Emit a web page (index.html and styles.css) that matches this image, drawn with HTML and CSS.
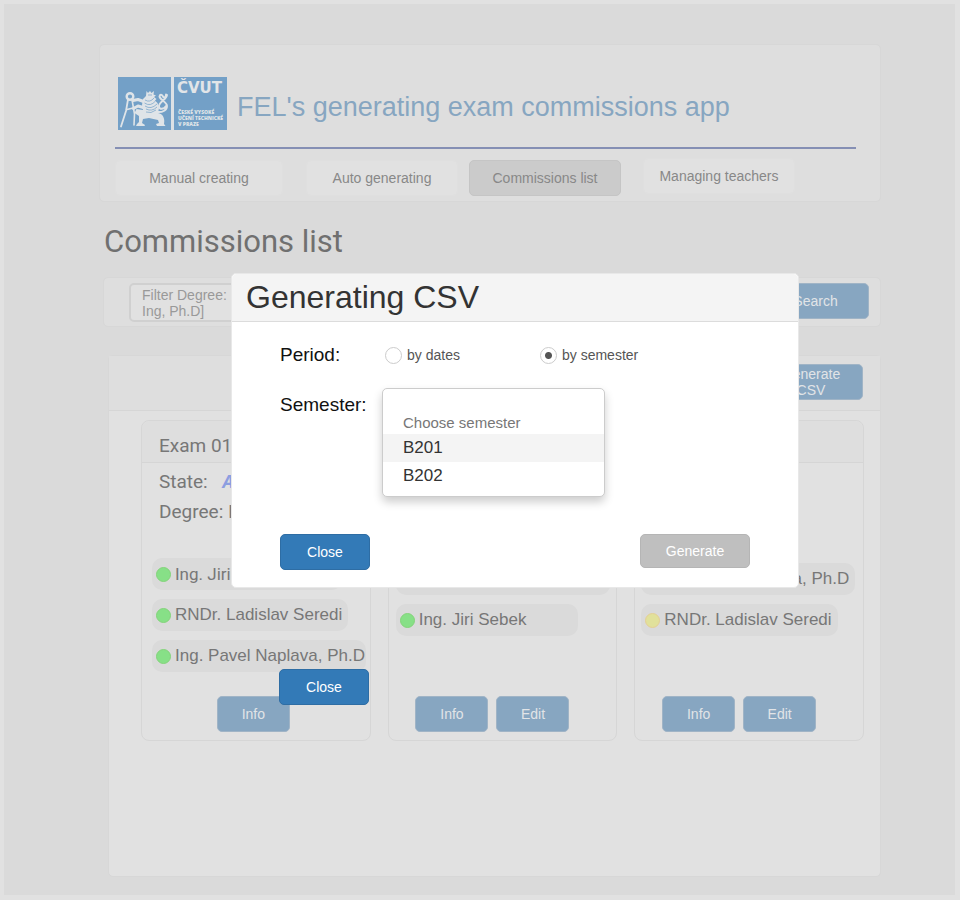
FILE: index.html
```html
<!DOCTYPE html>
<html lang="en">
<head>
<meta charset="utf-8">
<title>FEL's generating exam commissions app</title>
<link rel="stylesheet" href="styles.css">
</head>
<body>
<main class="frame">
  <header class="masthead">
    <div class="brand">
      <svg class="logo" viewBox="0 0 109 53" role="img" aria-label="ČVUT">
        <rect width="109" height="53" fill="#73a0c7"/>
        <rect x="53" width="3" height="53" fill="#dce1e5"/>
        <g fill="none" stroke="#dfe4e8" stroke-linecap="round" stroke-linejoin="round">
          <circle cx="12" cy="19.500" r="3.300" stroke-width="2.400"/>
          <path d="M10 22.500 8 34 3 49.500" stroke-width="1.800"/>
          <path d="M14 22.500 16.500 37 16 48" stroke-width="1.600"/>
          <path d="M27 25 20 22.500 15 23.500M27 31 20 29 15.500 31.500" stroke-width="3"/>
          <path d="M9 32.500 17 30.500" stroke-width="1.800"/>
          <path d="M39 35C45 35.500 49 33 49 29S42 23 41.500 19.500C42 17 44 17.500 45 19.500S48 20 48 17.500M49 18C49 22 41 25 41 29S46 32.500 48 29" stroke-width="1.900"/>
        </g>
        <g fill="#dfe4e8">
          <path d="M28.500 14 30 16 32 14 33.500 16 36 14 35.500 17.500 38 18.500 36 20 38.500 22 37 23.500 39.500 26 41 31 40 36C45 37 47 41 46 47L47.500 49H39L38 47 41 46 40 43 31 41 25 42 24 46 27 48 26.500 49H18L19 47 21 45V39L16.500 36 18.500 32 25 33 24 28 25 22 28 19Z"/>
        </g>
        <path d="M27 23q5 3 9-2M26.500 26q6 4 11-2M27 29q6 4 12-2M28 32q6 3 11-2M28 35q5 2 10-2M30 18h4" fill="none" stroke="#73a0c7" stroke-width=".7"/>
        <text x="59" y="16" class="logo-name">ČVUT</text>
        <text class="logo-sub"><tspan x="60" y="37">ČESKÉ VYSOKÉ</tspan><tspan x="60" y="43">UČENÍ TECHNICKÉ</tspan><tspan x="60" y="49">V PRAZE</tspan></text>
      </svg>
      <span class="brand-name">FEL's generating exam commissions app</span>
    </div>
    <nav class="tabs">
      <button class="tab tab-wide">Manual creating</button>
      <button class="tab">Auto generating</button>
      <button class="tab tab-active">Commissions list</button>
      <button class="tab tab-last">Managing teachers</button>
    </nav>
  </header>

  <h1 class="page-title">Commissions list</h1>

  <section class="filters">
    <button class="filter">Filter Degree:<br>Ing, Ph.D]</button>
    <button class="btn btn-search">Search</button>
  </section>

  <section class="panel">
    <div class="panel-head"><button class="btn btn-csv">Generate CSV</button></div>
    <div class="cards">
      <article class="card">
        <h2 class="card-title">Exam 01</h2>
        <div class="card-info">
          <p>State: <span class="state">A</span></p>
          <p>Degree: I</p>
        </div>
        <ul class="people">
          <li class="person person-wide roboto"><i class="dot"></i>Ing. Jiri</li>
          <li class="person"><i class="dot"></i>RNDr. Ladislav Seredi</li>
          <li class="person person-full"><i class="dot"></i>Ing. Pavel Naplava, Ph.D</li>
        </ul>
        <div class="actions actions-single"><button class="btn">Info</button></div>
      </article>
      <article class="card">
        <div class="card-title"></div>
        <div class="card-info"></div>
        <ul class="people people-spaced">
          <li class="person person-full"></li>
          <li class="person person-mid"><i class="dot"></i>Ing. Jiri Sebek</li>
        </ul>
        <div class="actions"><button class="btn">Info</button><button class="btn">Edit</button></div>
      </article>
      <article class="card">
        <div class="card-title"></div>
        <div class="card-info"></div>
        <ul class="people people-last">
          <li class="person person-full person-end">Naplava, Ph.D</li>
          <li class="person"><i class="dot dot-yellow"></i>RNDr. Ladislav Seredi</li>
        </ul>
        <div class="actions"><button class="btn">Info</button><button class="btn">Edit</button></div>
      </article>
    </div>
  </section>
</main>

<div class="overlay">
  <form class="modal" role="dialog" aria-labelledby="dialog-title">
    <h2 class="modal-title" id="dialog-title">Generating CSV</h2>
    <div class="modal-body">
      <div class="row">
        <span class="label">Period:</span>
        <label class="choice"><input type="radio" name="period">by dates</label>
        <label class="choice"><input type="radio" name="period" checked>by semester</label>
      </div>
      <div class="row row-top">
        <label class="label" for="semester">Semester:</label>
        <select class="menu" id="semester" size="3">
          <option class="hint" disabled>Choose semester</option>
          <option class="hovered">B201</option>
          <option>B202</option>
        </select>
      </div>
      <div class="modal-actions">
        <button type="button" class="btn btn-close">Close</button>
        <button type="button" class="btn btn-generate" disabled>Generate</button>
      </div>
    </div>
  </form>
  <button type="button" class="btn btn-close btn-outer">Close</button>
</div>
</body>
</html>
```
FILE: styles.css
```css
* { box-sizing: border-box; }
body {
  margin: 0;
  padding: 4px 5px 5px 4px;
  position: relative;
  background: #e1e1e1;
  font-family: "Liberation Sans", Arial, sans-serif;
  font-size: 14px;
  color: #777;
}
button { font: inherit; cursor: pointer; }
h1, h2, p, ul { margin: 0; padding: 0; font-weight: 400; }
ul { list-style: none; }

.frame { background: #dadada; padding: 40px 74px 18px 95px; }

.masthead {
  height: 158px;
  padding: 32px 24px 0 15px;
  background: #dedede;
  border: 1px solid #d7d7d7;
  border-radius: 5px;
}
.brand {
  display: flex;
  gap: 10px;
  height: 72px;
  padding-left: 3px;
  border-bottom: 2px solid #858fb4;
}
.logo { width: 109px; height: 53px; }
.logo-name { font: 700 15px "DejaVu Sans", sans-serif; fill: #e2e5e8; }
.logo-sub { font: 800 5px "Open Sans", sans-serif; fill: #dfe4e8; }
.brand-name { font-size: 27px; line-height: 60px; color: #87a6c1; white-space: nowrap; }

.tabs { display: flex; align-items: center; padding-top: 9px; }
.tab {
  width: 152px;
  height: 36px;
  padding: 0 0 1px;
  margin-right: 11px;
  color: #888;
  background: #e1e1e1;
  border: 1px solid #dfdfdf;
  border-radius: 5px;
}
.tab-wide { width: 168px; margin-right: 23px; }
.tab-active { background: #cbcbcb; border-color: #c5c5c5; margin-right: 22px; }
.tab-last { margin: 0 0 4px; }

.page-title {
  padding-left: 5px;
  margin: 21px 0 16px;
  font: 31px/38px Roboto, sans-serif;
  color: #707070;
}

.filters {
  display: flex;
  justify-content: space-between;
  margin-left: 4px;
  height: 50px;
  padding: 5px 11px 0 25px;
  background: #dedede;
  border: 1px solid #d7d7d7;
  border-radius: 5px;
}
.filter {
  width: 150px;
  height: 39px;
  padding: 0 11px;
  text-align: left;
  line-height: 16px;
  color: #999;
  background: #e1e1e1;
  border: 2px solid #d0d0d0;
  border-radius: 5px;
}
.btn {
  width: 73px;
  height: 36px;
  padding: 0;
  color: #e1e4e7;
  background: #87a6c1;
  border: 1px solid #a0b4c6;
  border-radius: 5px;
  line-height: 16px;
}
.btn-search { width: 107px; }
.btn-csv { width: 104px; padding: 0 20px; }

.panel {
  margin: 28px 0 0 9px;
  padding-bottom: 135px;
  background: #e1e1e1;
  border: 1px solid #d7d7d7;
  border-radius: 5px;
}
.panel-head {
  display: flex;
  justify-content: flex-end;
  height: 55px;
  padding: 8px 17px 0;
  background: #dedede;
  border-bottom: 1px solid #d6d6d6;
}
.cards {
  display: grid;
  grid-template-columns: repeat(3, minmax(0, 1fr));
  gap: 17px;
  padding: 9px 16px 0 32px;
}
.card {
  height: 321px;
  display: flex;
  flex-direction: column;
  border: 1px solid #d6d6d6;
  border-radius: 8px;
}
.card-title {
  height: 42px;
  padding: 4px 17px 0;
  font: 19px/42px Roboto, sans-serif;
  background: #dedede;
  border-bottom: 1px solid #d5d5d5;
  border-radius: 8px 8px 0 0;
}
.card-info {
  height: 92px;
  padding: 4px 17px;
  font: 19px/30px Roboto, sans-serif;
}
.state { margin-left: 10px; font: italic 700 18px "Open Sans", sans-serif; color: #8c9ee0; }
.people {
  display: flex;
  flex-direction: column;
  align-items: flex-start;
  gap: 9px;
  padding: 3px 3px 0 10px;
}
.people-spaced { padding: 8px 3px 0 7px; }
.people-last { padding: 8px 3px 0 6px; }
.person {
  display: flex;
  align-items: center;
  gap: 4px;
  height: 32px;
  padding: 0 6px 0 4px;
  font-size: 17px;
  white-space: nowrap;
  background: #dadada;
  border-radius: 10px;
}
.person-wide { width: 190px; }
.person-full { width: 214px; }
.person-mid { width: 182px; }
.person-end { justify-content: flex-end; }
.roboto { font-family: Roboto, sans-serif; }
.dot {
  flex: none;
  width: 15px;
  height: 15px;
  background: #87e087;
  border: 1px solid #83d47a;
  border-radius: 50%;
}
.dot-yellow { background: #e1e19b; border-color: #e5cf94; }
.actions {
  display: flex;
  justify-content: center;
  gap: 8px;
  margin-top: auto;
  padding: 0 20px 8px 0;
}
.actions-single { padding-right: 5px; }

.overlay { position: absolute; inset: 0; padding: 273px 161px 0 231px; }
.modal {
  background: #fff;
  border: 1px solid #e8e8e8;
  border-radius: 5px;
  color: #555;
}
.modal-title {
  padding-left: 14px;
  font-size: 32px;
  line-height: 47px;
  color: #333;
  background: #f4f4f4;
  border-bottom: 1px solid #dcdcdc;
  border-radius: 5px 5px 0 0;
}
.modal-body { padding: 17px 48px; }
.row { display: flex; align-items: center; height: 32px; }
.label { width: 105px; font-size: 19px; color: #111; }
.choice { display: flex; align-items: center; gap: 5px; width: 155px; }
.choice input {
  appearance: none;
  width: 17px;
  height: 17px;
  margin: 0;
  border: 1px solid #ccc;
  border-radius: 50%;
}
.choice input:checked { background: radial-gradient(circle, #555 3px, #fff 4px); }
.row-top { align-items: flex-start; height: 110px; margin-top: 17px; }
.row-top .label { width: 102px; line-height: 34px; }
.menu {
  appearance: none;
  width: 223px;
  height: 109px;
  padding: 21px 0 0;
  font: 17px "Liberation Sans", sans-serif;
  color: #333;
  background: #fff;
  border: 1px solid #ccc;
  border-radius: 5px;
  box-shadow: 0 5px 10px #0003;
  overflow: hidden;
}
.menu option { height: 28px; padding: 4px 20px 0; }
.menu .hint { height: 24px; font-size: 15px; color: #777; }
.menu .hovered { background: #f4f4f4; }
.modal-actions { display: flex; justify-content: space-between; margin-top: 36px; }
.btn-close { width: 90px; color: #fff; background: #337ab7; border-color: #2e6da4; }
.btn-generate { width: 110px; height: 34px; color: #fff; background: #bfbfbf; border-color: #b5b5b5; }
.btn-outer { display: block; margin: 81px 0 0 48px; }
```
